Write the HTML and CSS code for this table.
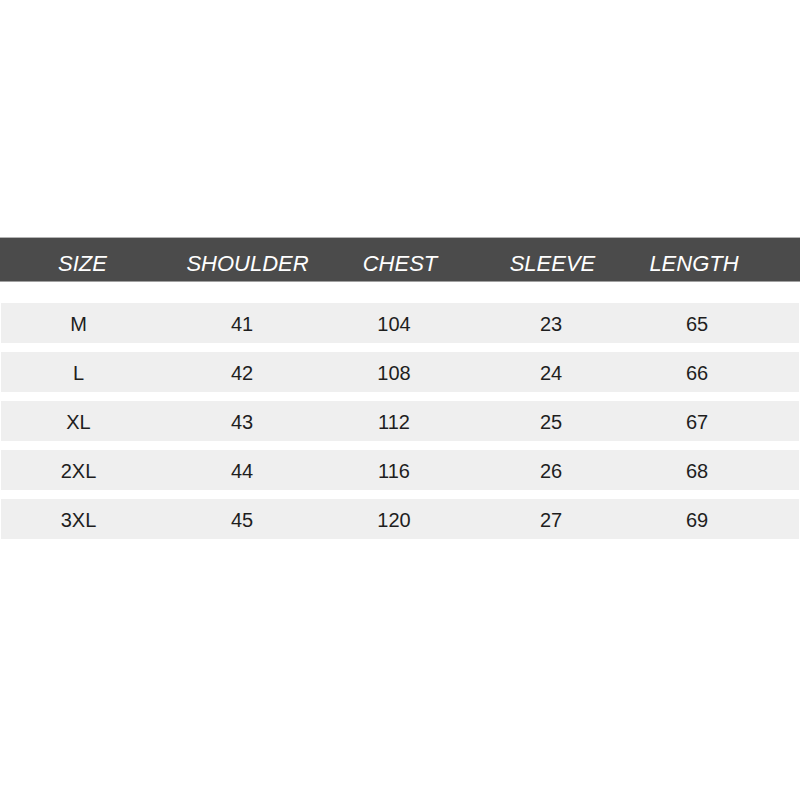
FILE: index.html
```html
<!DOCTYPE html>
<html>
<head>
<meta charset="utf-8">
<link rel="stylesheet" href="styles.css">
</head>
<body>
<div class="page">
  <div class="chart">
    <div class="head">
      <div>SIZE</div><div>SHOULDER</div><div>CHEST</div><div>SLEEVE</div><div>LENGTH</div>
    </div>
    <div class="rows">
      <div class="row"><div>M</div><div>41</div><div>104</div><div>23</div><div>65</div></div>
      <div class="row"><div>L</div><div>42</div><div>108</div><div>24</div><div>66</div></div>
      <div class="row"><div>XL</div><div>43</div><div>112</div><div>25</div><div>67</div></div>
      <div class="row"><div>2XL</div><div>44</div><div>116</div><div>26</div><div>68</div></div>
      <div class="row"><div>3XL</div><div>45</div><div>120</div><div>27</div><div>69</div></div>
    </div>
  </div>
</div>
</body>
</html>
```

FILE: styles.css
```css
html, body {
  margin: 0;
  padding: 0;
  background: #ffffff;
}
.page {
  width: 800px;
  height: 800px;
  padding-top: 237px;
  box-sizing: border-box;
  font-family: "Liberation Sans", Arial, sans-serif;
}
.chart {
  display: flex;
  flex-direction: column;
}
.head {
  display: grid;
  grid-template-columns: 165px 165px 140px 165px 118px 1fr;
  align-items: center;
  height: 45px;
  box-sizing: border-box;
  padding-top: 8px;
  background: #4b4b4b;
  border-top: 1px solid #b4b4b4;
  border-bottom: 1px solid #a0a0a0;
  color: #ffffff;
  font-size: 22px;
  font-style: italic;
}
.head > div,
.row > div {
  text-align: center;
}
.rows {
  display: flex;
  flex-direction: column;
  gap: 9px;
  margin-top: 21px;
  padding: 0 1px;
}
.row {
  display: grid;
  grid-template-columns: 155px 172px 132px 182px 110px 1fr;
  align-items: center;
  height: 40px;
  background: #efefef;
  color: #1e1e1e;
  font-size: 20px;
  padding-top: 2px;
  box-sizing: border-box;
}
```
